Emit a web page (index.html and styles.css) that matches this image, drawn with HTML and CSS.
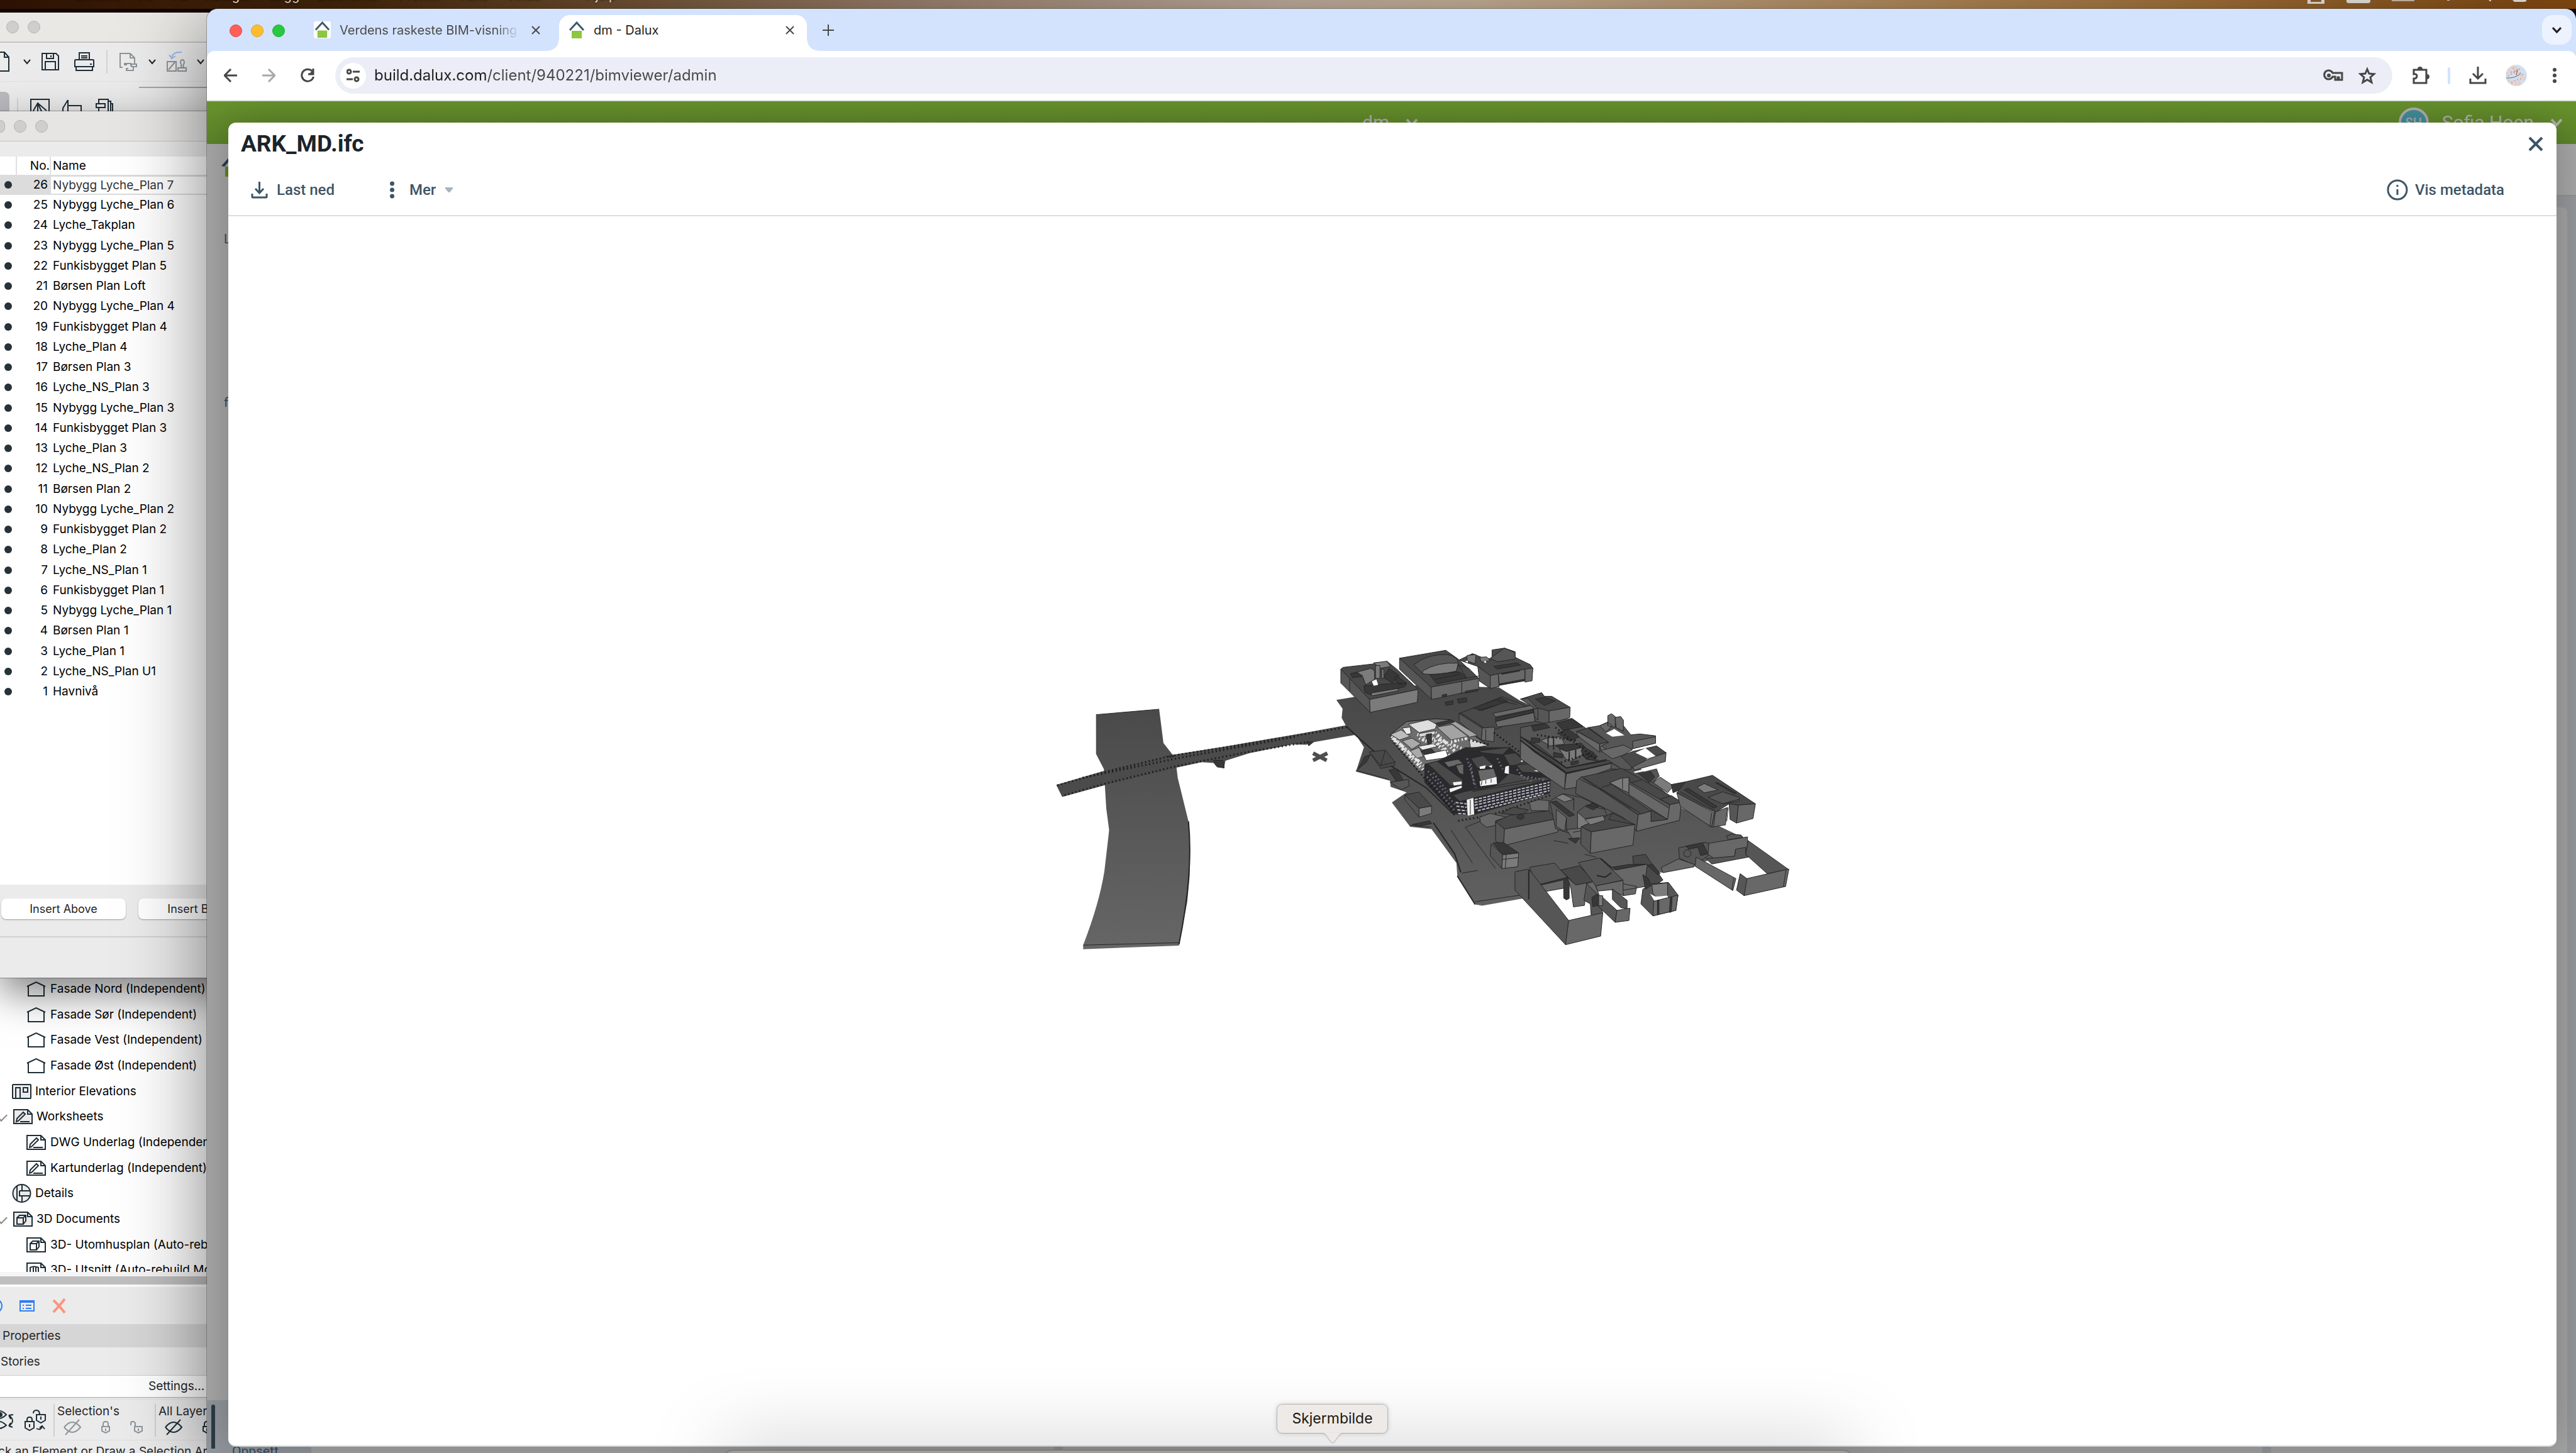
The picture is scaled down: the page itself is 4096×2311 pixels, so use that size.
FILE: index.html
```html
<!DOCTYPE html>
<html lang="no">
<head>
<meta charset="utf-8">
<title>dm - Dalux</title>
<link rel="stylesheet" href="styles.css">
</head>
<body>
<svg class="defs" width="0" height="0" aria-hidden="true">
  <defs>
    <symbol id="i-house" viewBox="0 0 31 26"><path d="M1 9 15.500 2 30 9M3 9v15h25V9"/></symbol>
    <symbol id="i-interior" viewBox="0 0 31 26"><rect x="1" y="2" width="29" height="22" rx="1" class="tint"/><path d="M6 24V7h7v17M18 7h7v7h-7z"/></symbol>
    <symbol id="i-sheet" viewBox="0 0 31 26"><path class="tint" d="M1 2h22l7 7v15H1zM23 2v7h7"/><path d="M5 21l1-5L16 6l3 3L8 20zM11 21h15"/></symbol>
    <symbol id="i-detail" viewBox="0 0 31 30"><circle cx="15.500" cy="15" r="14" class="tint"/><path d="M8 3v24M16 1v10h13M16 29V19h13M12 11v8h4M12 11h4"/></symbol>
    <symbol id="i-3d" viewBox="0 0 31 26"><path class="tint" d="M1 2h22l7 7v15H1zM23 2v7h7"/><path d="M6 11h10v10H6zM6 11l4-4h10v9l-4 5M16 11l4-4"/></symbol>
    <symbol id="i-cut" viewBox="0 0 31 26"><path d="M1 2h22l7 7v15H1zM23 2v7h7M6 22V9q6-3 13 0v13M11 8v14M15 8v14"/></symbol>
    <symbol id="i-chev" viewBox="0 0 12 12"><path d="M1 3l5 6 5-6"/></symbol>
    <symbol id="i-x" viewBox="0 0 14 14"><path d="M1 1l12 12M13 1 1 13"/></symbol>
    <symbol id="i-eyeoff" viewBox="0 0 28 26"><path d="M1 13q13-16 26 0-13 16-26 0M3 25 25 1"/></symbol>
    <symbol id="i-lock" viewBox="0 0 14 20"><path d="M1 9h12v7l-6 3-6-3zM3 9V5q0-4 4-4t4 4v4M7 12v4"/></symbol>
    <symbol id="i-unlock" viewBox="0 0 20 20"><path d="M7 9h12v7l-6 3-6-3zM1 7V4q0-3 3-3t4 3v5M13 12v4"/></symbol>
    <symbol id="i-dalux" viewBox="0 0 26 28"><path d="M2 14 13 2l11 12" fill="none" stroke="#3d5a6c" stroke-width="3"/><path d="M5 15h16v12H5z" fill="#8dc63f" stroke="none"/></symbol>
  </defs>
</svg>

<div class="desktop">
  <div class="menubar">
    <nav class="menus"><span>Chrome</span><span>Fil</span><span>Vis</span><span>Rediger</span><span>Logg</span><span>Bokmerker</span><span>Profiler</span><span>Fane</span><span>Vindu</span><span>Hjelp</span></nav>
    <svg class="status-icons" width="370" height="8" viewBox="0 0 370 8"><path d="M0 0h27v6H0z" fill="#f4efe9"/><path d="M5 0h17v3H5z" fill="#9a6228"/><path d="M62 0h38v2q0 3-4 3H66q-4 0-4-3z" fill="#f4efe9"/><path d="M134 0h36v2h-36z" fill="#d8c5b0"/><path d="M222 0h4v1h-4zM288 0h4v2h-2zM326 0h22v2l-3 1h-16z" fill="#f4efe9"/></svg>
  </div>

  <section class="archicad">
    <div class="titlebar first"><i></i><i></i></div>
    <div class="tools">
      <svg width="15" height="34" viewBox="0 0 15 34"><path d="M-8 2H7l7 8v22H-8M7 2v8h7"/></svg>
      <svg class="chev c1" width="12" height="12"><use href="#i-chev"/></svg>
      <svg class="c2" width="28" height="30" viewBox="0 0 28 30"><path d="M1 2h22l4 4v22H1zM8 2v8h11V2M15 5v3M6 28V15h16v13"/></svg>
      <svg class="c3" width="32" height="30" viewBox="0 0 32 30"><path d="M8 12V1h16v11M11 6h10M11 9h10M1 13q0-1 2-1h26q2 0 2 1v10H1zM3 23v6h26v-6M25 19h3"/></svg>
      <b class="rule"></b>
      <svg class="c4 dim" width="28" height="30" viewBox="0 0 28 30"><path d="M5 24H1V2h16l7 7v9M17 2v7h7M12 20h-4v-2h10v4M14 26h-3v3h11v-6h5v-4h-8v4h3"/></svg>
      <svg class="chev c5" width="12" height="12"><use href="#i-chev"/></svg>
      <svg class="c6 dim" width="32" height="34" viewBox="0 0 32 34"><path d="M1 17h14v15H1zM3 30 13 18M18 32v-5h13v5zM22 27q3-3 0-8 0-5 3-5t3 5q-3 5 0 8"/><path d="M8 10q2-9 16-8M4 6l4 6 6-4" stroke="#2f7cf6"/></svg>
      <svg class="chev c7" width="12" height="12"><use href="#i-chev"/></svg>
    </div>
    <div class="tools second">
      <span class="pressed"></span><b class="rule"></b>
      <svg class="s1" width="31" height="30" viewBox="0 0 31 30"><path d="M1 2h29v28H1zM5 20 12 8l14 12M12 8v22M5 20v10M12 8l10 22"/></svg>
      <svg class="s2" width="31" height="34" viewBox="0 0 31 34"><path d="M9 3 1 16v18M9 3v31M9 12h21v22M19 30h9"/></svg>
      <svg class="s3" width="28" height="32" viewBox="0 0 28 32"><path d="M5 8V2h15v30M1 9h14v6H1zM5 15v17M20 5h4v27M24 9h3v23"/></svg>
    </div>
    <ul class="navigator">
      <li class="sub"><svg width="31" height="26"><use href="#i-house"/></svg>Fasade Nord (Independent)</li>
      <li class="sub"><svg width="31" height="26"><use href="#i-house"/></svg>Fasade Sør (Independent)</li>
      <li class="sub"><svg width="31" height="26"><use href="#i-house"/></svg>Fasade Vest (Independent)</li>
      <li class="sub"><svg width="31" height="26"><use href="#i-house"/></svg>Fasade Øst (Independent)</li>
      <li><svg width="31" height="26"><use href="#i-interior"/></svg>Interior Elevations</li>
      <li class="open"><svg width="31" height="26"><use href="#i-sheet"/></svg>Worksheets</li>
      <li class="sub"><svg width="31" height="26"><use href="#i-sheet"/></svg>DWG Underlag (Independent)</li>
      <li class="sub"><svg width="31" height="26"><use href="#i-sheet"/></svg>Kartunderlag (Independent)</li>
      <li><svg width="31" height="30"><use href="#i-detail"/></svg>Details</li>
      <li class="open"><svg width="31" height="26"><use href="#i-3d"/></svg>3D Documents</li>
      <li class="sub"><svg width="31" height="26"><use href="#i-3d"/></svg>3D- Utomhusplan (Auto-rebuild Model)</li>
      <li class="sub"><svg width="31" height="26"><use href="#i-cut"/></svg>3D- Utsnitt (Auto-rebuild Model)</li>
    </ul>
    <div class="splitter"></div>
    <div class="actions">
      <svg width="4" height="24" viewBox="0 0 4 24"><circle cx="-8" cy="12" r="11" stroke="#2f7cf6"/></svg>
      <svg class="a1" width="24" height="20" viewBox="0 0 24 20"><path d="M1 2h22v16H1z" stroke="#2f7cf6"/><path d="M1 1h22v4H1z" fill="#2f7cf6" stroke="none"/><path d="M5 9h2M10 9h9M5 14h2M10 14h9" stroke="#2f7cf6"/></svg>
      <svg class="a2" width="22" height="26" viewBox="0 0 22 26"><path d="M2 4l9 9 9 11M20 2l-9 11-9 10" stroke="#fa9580" stroke-width="4"/></svg>
    </div>
    <div class="prop head">Properties</div>
    <div class="prop">Stories</div>
    <div class="settings"><button type="button">Settings...</button></div>
    <div class="layers">
      <svg width="22" height="32" viewBox="0 0 22 32"><path d="M-12 7q10-12 22 0-12 12-22 0M-12 24q10-12 22 0-12 10-22 0M14 8l7-1M14 8l3 6M14 8q12 9 0 17M14 25l6 2M14 25l3-5"/><circle cx="0" cy="7" r="3" fill="#1f2d36"/></svg>
      <svg class="l1" width="34" height="34" viewBox="0 0 34 34"><path d="M1 19h14v10l-7 4-7-4zM4 19v-3q0-4 4-4t4 4v3M8 23v5M19 8h14v9l-7 4-7-4zM14 6q0-5 5-5t5 7M26 11v5M19 30q7 4 9-4M24 29l4-3 4 5"/></svg>
      <div class="group"><span>Selection's</span><div class="dim"><svg width="28" height="26"><use href="#i-eyeoff"/></svg><svg class="g1" width="14" height="20"><use href="#i-lock"/></svg><svg class="g2" width="20" height="20"><use href="#i-unlock"/></svg></div></div>
      <div class="group"><span>All Layers</span><div><svg width="28" height="26"><use href="#i-eyeoff"/></svg><svg class="g1" width="14" height="20"><use href="#i-lock"/></svg></div></div>
    </div>
    <div class="hint"><span>Click an Element or Draw a Selection Area.</span></div>
  </section>

  <section class="stories">
    <div class="titlebar"><i></i><i></i><i></i></div>
    <div class="band"></div>
    <table>
      <thead><tr><th></th><th>No.</th><th>Name</th></tr></thead>
      <tbody>
        <tr class="sel"><td></td><td>26</td><td><input aria-label="Name" value="Nybygg Lyche_Plan 7"></td></tr>
        <tr><td></td><td>25</td><td>Nybygg Lyche_Plan 6</td></tr>
        <tr><td></td><td>24</td><td>Lyche_Takplan</td></tr>
        <tr><td></td><td>23</td><td>Nybygg Lyche_Plan 5</td></tr>
        <tr><td></td><td>22</td><td>Funkisbygget Plan 5</td></tr>
        <tr><td></td><td>21</td><td>Børsen Plan Loft</td></tr>
        <tr><td></td><td>20</td><td>Nybygg Lyche_Plan 4</td></tr>
        <tr><td></td><td>19</td><td>Funkisbygget Plan 4</td></tr>
        <tr><td></td><td>18</td><td>Lyche_Plan 4</td></tr>
        <tr><td></td><td>17</td><td>Børsen Plan 3</td></tr>
        <tr><td></td><td>16</td><td>Lyche_NS_Plan 3</td></tr>
        <tr><td></td><td>15</td><td>Nybygg Lyche_Plan 3</td></tr>
        <tr><td></td><td>14</td><td>Funkisbygget Plan 3</td></tr>
        <tr><td></td><td>13</td><td>Lyche_Plan 3</td></tr>
        <tr><td></td><td>12</td><td>Lyche_NS_Plan 2</td></tr>
        <tr><td></td><td>11</td><td>Børsen Plan 2</td></tr>
        <tr><td></td><td>10</td><td>Nybygg Lyche_Plan 2</td></tr>
        <tr><td></td><td>9</td><td>Funkisbygget Plan 2</td></tr>
        <tr><td></td><td>8</td><td>Lyche_Plan 2</td></tr>
        <tr><td></td><td>7</td><td>Lyche_NS_Plan 1</td></tr>
        <tr><td></td><td>6</td><td>Funkisbygget Plan 1</td></tr>
        <tr><td></td><td>5</td><td>Nybygg Lyche_Plan 1</td></tr>
        <tr><td></td><td>4</td><td>Børsen Plan 1</td></tr>
        <tr><td></td><td>3</td><td>Lyche_Plan 1</td></tr>
        <tr><td></td><td>2</td><td>Lyche_NS_Plan U1</td></tr>
        <tr><td></td><td>1</td><td>Havnivå</td></tr>
      </tbody>
    </table>
    <div class="buttons"><button type="button">Insert Above</button><button type="button">Insert Below</button></div>
    <div class="foot"></div>
  </section>

  <section class="chrome">
    <div class="tabstrip">
      <div class="lights"><i></i><i></i><i></i></div>
      <div class="tab">
        <svg class="fav boxed" width="27" height="27"><use href="#i-dalux"/></svg><span class="fade">Verdens raskeste BIM-visning</span>
        <button type="button" aria-label="Lukk fane"><svg width="14" height="14"><use href="#i-x"/></svg></button>
      </div>
      <div class="tab active">
        <svg class="fav" width="26" height="28"><use href="#i-dalux"/></svg><span>dm - Dalux</span>
        <button type="button" aria-label="Lukk fane"><svg width="14" height="14"><use href="#i-x"/></svg></button>
      </div>
      <button class="plus" type="button" aria-label="Ny fane"><svg width="18" height="18" viewBox="0 0 18 18"><path d="M9 0v18M0 9h18"/></svg></button>
      <button class="search" type="button" aria-label="Søk i faner"><svg width="15" height="12" viewBox="0 0 15 12"><path d="M1 2l6.500 7L14 2"/></svg></button>
    </div>
    <div class="toolbar">
      <button type="button" aria-label="Tilbake"><svg width="21" height="22" viewBox="0 0 21 22"><path d="M21 11H2M11 1 1 11l10 10"/></svg></button>
      <button class="off" type="button" aria-label="Frem"><svg width="21" height="22" viewBox="0 0 21 22"><path d="M0 11h19M10 1l10 10-10 10"/></svg></button>
      <button type="button" aria-label="Last inn på nytt"><svg width="22" height="24" viewBox="0 0 22 24"><path d="M18 5a9.500 9.500 0 1 0 2.500 9M20 1v9h-8"/><path d="M21 2v8h-8z" fill="#474747" stroke="none"/></svg></button>
      <div class="omnibox">
        <span class="site"><svg width="21" height="22" viewBox="0 0 21 22"><circle cx="4" cy="5" r="3"/><path d="M10 5h11M0 17h10"/><circle cx="16" cy="17" r="3"/></svg></span>
        <input class="url" aria-label="Adresse" value="build.dalux.com/client/940221/bimviewer/admin">
        <svg width="32" height="20" viewBox="0 0 32 20"><path d="M15 6h15v11h-5v-4h-2v4h-4v-5h-4a7 7 0 1 1 0-6z"/><circle cx="9" cy="10" r="3" fill="#474747" stroke="none"/></svg>
        <svg width="28" height="28" viewBox="0 0 28 28"><path d="M14 4l3 7 8 .700-6 5.300 2 8-7-4.300L7 25l2-8-6-5.300 8-.700z"/></svg>
      </div>
      <svg class="t1" width="28" height="30" viewBox="0 0 28 30"><path d="M3 6h20v21H3v-7q5 0 5-4t-5-3z"/><path d="M9 5a4 4 0 0 1 8 0zM24 13a4 4 0 0 1 0 8z" fill="#474747" stroke="none"/></svg>
      <b class="sep"></b>
      <svg class="t2" width="28" height="28" viewBox="0 0 28 28"><path d="M14 0v18M6 11l8 8 8-8M2 19v7h24v-7"/></svg>
      <svg class="t3" width="34" height="34" viewBox="0 0 34 34"><circle cx="17" cy="17" r="17" fill="#cfe0f2" stroke="none"/><g stroke="#e6cdc8" stroke-width="5" stroke-dasharray="4 2"><path d="M3 8q10-7 18 0M1 14q14-6 30 8M3 25q10 7 20 1M11 2l8 12M8 30l16 1M24 16l8 8"/></g><g stroke="#c9a49c" stroke-width="2" stroke-dasharray="2 3"><path d="M8 12q10-5 22 6M9 28q8-5 18-6M4 18l20-12M12 5l4 7"/></g><path d="M1 21q14 1 23-7M17 17l2-10" stroke="#7c5f5a" stroke-width="1"/></svg>
      <svg class="t4" width="6" height="24" viewBox="0 0 6 24"><g fill="#474747" stroke="none"><circle cx="3" cy="3" r="3"/><circle cx="3" cy="12" r="3"/><circle cx="3" cy="21" r="3"/></g></svg>
    </div>
    <div class="page">
      <header class="green">
        <span class="project">dm</span><svg class="gchev" width="20" height="14" viewBox="0 0 20 14"><path d="M2 2l8 9 8-9"/></svg>
        <span class="who">SH</span><span class="name">Sofia Hoen</span><svg class="gchev" width="20" height="14" viewBox="0 0 20 14"><path d="M2 2l8 9 8-9"/></svg>
      </header>
      <div class="crumbs"><svg width="44" height="50" viewBox="0 0 44 50"><path d="M0 29 22 4l22 25-5 1L22 10 5 30z" fill="#2c3f4c"/><path d="M6 30h32v16H6z" fill="#5f8829"/></svg></div>
      <div class="workspace">
        <aside><div class="list"><span>L</span><span>f</span></div><div class="setup"><b></b><span>Oppsett</span></div></aside>
        <main><div></div><div></div><div></div></main>
      </div>
      <div class="modal" role="dialog" aria-label="ARK_MD.ifc">
        <div class="modal-head"><h1>ARK_MD.ifc</h1><button type="button" aria-label="Lukk"><svg width="24" height="24" viewBox="0 0 24 24"><path d="M2 2l20 20M22 2 2 22"/></svg></button></div>
        <div class="modal-tools">
          <button type="button"><svg width="27" height="28" viewBox="0 0 27 28"><path d="M13.500 1v17M7 12l6.500 7 6.500-7M2 20v5q0 1 1 1h21q1 0 1-1v-5"/></svg>Last ned</button>
          <button class="more" type="button"><svg width="7" height="28" viewBox="0 0 7 28"><g fill="#3d5566" stroke="none"><circle cx="3.500" cy="4" r="3.500"/><circle cx="3.500" cy="14" r="3.500"/><circle cx="3.500" cy="24" r="3.500"/></g></svg>Mer<svg class="caret" width="12" height="8" viewBox="0 0 12 8"><path d="M0 0h12v2L7 8H5L0 2z" fill="#aab5bd" stroke="none"/></svg></button>
          <button class="meta" type="button"><svg width="34" height="34" viewBox="0 0 34 34"><circle cx="17" cy="17" r="15" stroke-width="3"/><path d="M17 16v9M17 9v3"/></svg>Vis metadata</button>
        </div>
        <div class="viewer">
          <svg class="model" viewBox="1830 1177 1560 760" role="img" aria-label="3D-modell">
            <defs>
              <linearGradient id="riv" x1="0" y1="0" x2="0" y2="1"><stop offset="0" stop-color="#4a4a4a"/><stop offset="1" stop-color="#666"/></linearGradient>
              <linearGradient id="gnd" x1="0" y1="0" x2="0" y2="1"><stop offset="0" stop-color="#474747"/><stop offset="1" stop-color="#606060"/></linearGradient>
            </defs>
            <g transform="translate(1940 1180) scale(.4464 .4082)">
              <path fill="url(#riv)" d="M257 390 522 365 540 520 590 590 600 680 645 880 652 1020 650 1130 640 1250 605 1440V1450L203 1467V1448Q270 1260 292 1110 306 980 312 920L300 820 290 640 257 570z"/>
              <path class="ln" d="M203 1448 605 1437M257 390 522 365"/>
              <path class="ln thick" d="M645 880Q666 1120 605 1445"/>
              <path fill="#4b4b4b" d="M90 712 285 650 570 576 800 536 1130 474 1350 430 1460 418 1490 450 1350 482 1150 520 1140 528 1080 527 900 567 800 602 795 632 760 625 750 612 700 608 600 632 300 712 115 768z"/>
              <g class="dots"><path d="M95 715 285 655 570 580 800 540 1130 480 1350 440M125 760 300 705 600 625 900 560 1150 515M200 680 600 590 1100 490"/></g>
              <path class="dk" d="M750 600 790 600 795 635 765 630zM550 583l40-8-10 10zM1140 515h30l-20 18z"/>
              <path d="M1168 567 1225 600M1168 600 1228 567" stroke="#4d4d4d" stroke-width="6"/>
            </g>
            <g transform="translate(2460 1180) scale(.3333 .3444)">
              <path fill="url(#gnd)" d="M135 382 240 365 600 300 1050 315 1165 385 1700 620 2079 972 2379 1112 2440 1180 2152 1282 1966 1322 1830 1300 1440 1420 1200 1460 955 1502 915 1495 815 1340 810 1270 670 1085 550 1072 447 940 530 885 440 855 437 822 245 772 290 640 250 580 190 525 165 480 170 430z"/>
              <path class="ln thick" d="M190 525 250 580 440 740 640 860 800 1010M680 1050 800 1220 835 1320M815 1340 915 1495"/>
              <path class="ln" d="M245 765 430 815M550 1065 665 1075M860 1075 1030 1300M780 1090 900 1270M915 1480 1200 1440M860 1075 950 1040M840 1325 930 1310"/>
              <path class="r" d="M160 215 172 205 335 187 420 172 475 215 595 325 322 380 210 265z"/>
              <path class="s" d="M160 215 210 265 322 380 325 450 160 290z"/><path class="ln" d="M210 265v70"/>
              <path class="l" d="M322 380 595 325 590 395 325 450zM215 240 330 210 350 225 350 270 300 300 285 260zM345 180 420 172 440 200 380 210z"/>
              <path class="dk" d="M290 305 480 290 530 295 520 310 330 355 295 340zM430 210l60 40-40 40-50-30zM215 238l40-5 30 20-60 8zM470 250l60 40-40 10-30-30z"/>
              <path class="l" d="M355 195h25v70h-25zM390 215h12v50h-12zM330 345l150-25 5 12-150 28z"/>
              <path fill="#fff" d="M335 280 360 270 370 300 345 305z"/>
              <path class="s" d="M490 155 668 312 670 380 490 215z"/>
              <path class="r" d="M490 155 750 112 820 160 935 265 668 312z"/>
              <path class="m" d="M668 312 935 265V325L670 380z"/>
              <path class="s" d="M570 190Q650 130 760 135 820 145 820 185L810 230 620 240z"/>
              <path class="l" d="M620 225Q700 175 820 182L810 225Q700 250 620 240z"/>
              <path class="dk" d="M660 245 830 230 870 262 700 295zM730 355l25-5v12l-25 4zM860 335l70-12v10l-70 12z"/>
              <path class="ln" d="M690 270l140-28M840 285v65M855 265 935 252M860 250l-40-60 60 20 55 55"/>
              <path class="r" d="M825 165 900 130 950 150 1010 160V110L1080 100 1140 120V150L1225 190 1240 210 1050 240 1000 250 930 200z"/>
              <path class="s" d="M930 200 1000 250V320L940 280zM1000 155 1080 100 1140 125V160L1040 175z"/>
              <path class="m" d="M1000 250 1045 240 1050 310 1000 320zM1045 240 1195 215V278L1050 302zM1195 215 1240 208 1235 278 1195 285z"/>
              <path class="l" d="M870 140 920 135 915 185 870 170zM940 150l40-2 20 20-50 8z"/>
              <path fill="#fff" d="M858 172l16-4v12zM965 172l12-2v10l-12-2z"/>
              <path class="dk" d="M1020 200l130-20 20 12-130 22zM1065 238l100-18v5l-100 18zM1050 295l140-25v8l-140 25z"/>
              <path class="dk" d="M745 395 790 386V406L752 412zM815 378 865 370 870 392 822 400z"/>
              <path class="r" d="M825 455 910 425 1065 365 1165 400 1250 440 1040 540 955 535z"/>
              <path class="s" d="M825 455 955 535 950 600 825 500z"/>
              <path class="m" d="M955 535 1025 530 1020 610 950 600zM1030 500 1250 450V500L1040 530zM1015 455 1240 410 1250 430 1030 475z"/>
              <path class="dk" d="M905 425 1060 372 1100 390 950 440zM1030 480 1245 436 1250 448 1030 498z"/>
              <path class="ln" d="M830 450 960 530M930 440l110-30M975 540v60M1040 385l110 22"/>
              <path class="r" d="M320 665 410 655 465 720 460 740 385 755z"/><path class="ln" d="M320 665 385 740 465 720M410 655 385 740"/>
              <path class="dk" d="M430 765l40-10 40 60-30 20zM255 760l40-70 30-10-20 40z"/>
              <path class="s" d="M437 830 540 815 545 850 500 870z"/>
              <path class="r" d="M520 900 600 883 670 960 600 972z"/><path class="s" d="M520 900 600 972V1020L520 925z"/><path class="l" d="M600 972 670 960V1000L600 1020z"/>
              <path class="dk" d="M560 1060l100-20 10 15-60 12z"/>
              <path fill="#6e6e6e" stroke="#1c1c1c" stroke-width="1" d="M440 570 530 500 690 485 780 490 990 630 860 660 640 760 600 772 450 610z"/>
              <g class="speck"><path d="M450 590 630 770M445 580 625 740M480 610 600 720M590 570 690 600M600 590 720 640M650 560 740 660M690 560 800 660M720 600 850 650M780 610 870 590M700 580 780 700"/></g>
              <g stroke="#333" stroke-width="1">
              <path fill="#dedede" d="M540 515 650 490 700 515 690 540 600 560z"/><path fill="#bdbdbd" d="M440 570 500 545 550 580 490 600z"/><path fill="#ececec" d="M505 535 550 530 555 565 530 570zM595 635 680 620 705 635 620 655z"/><path fill="#aaa" d="M505 605 560 590 610 620 560 650zM550 660 600 640 625 690 590 700z"/>
              <path fill="#a3a3a3" d="M700 530 790 515 880 580 780 600zM765 500 800 497 930 575 880 585z"/><path fill="#d8d8d8" d="M880 590 990 630 890 645zM600 565l90-15v20l-90 15z"/><path fill="#fff" d="M625 680 750 655 765 695 640 712z"/></g>
              <path class="dk" d="M690 510l90-20 20 12-90 22zM640 570l30-5v50l-20 10zM610 660l60-12 20 20-60 12z"/>
              <path fill="#2b2b2e" d="M630 730 700 715 860 640 1110 640 1340 810 1335 890 900 1010 800 1005 630 830z"/>
              <g class="r"><path d="M650 730 700 715 850 820 780 850zM890 700 960 685 1020 740 930 755zM1075 680 1140 670 1210 730 1110 740zM1145 735 1200 720 1290 780 1180 775zM1030 850 1110 780 1290 820 900 880zM790 900 860 880 1300 800 1340 815 910 915 830 935zM930 660 1110 640 1070 680 960 670z"/></g>
              <path class="m" d="M740 720 820 705 850 730 765 748zM805 735 850 728V790L825 780zM930 765 1020 755 1035 800 945 825z"/>
              <g fill="#f2f2f2"><path d="M940 825 1035 800 1038 840 945 852zM770 865 840 848V860L775 885zM790 830 840 825V842L795 848zM940 745 975 738 970 756 942 758zM990 742 1012 738 1008 752zM1085 745 1105 740V785L1080 780zM868 925 905 915 910 1005 873 1012zM1245 768l25-8v12zM1170 715l12-6v12z"/></g>
              <g class="win"><path d="M805 940 868 948M810 960 868 966M815 980 868 985M820 1000 868 1003M912 925 1335 830M912 940 1335 845M912 955 1335 860M915 972 1335 875M930 985 1300 895"/></g>
              <g class="win faint"><path d="M650 770 800 950M645 800 800 985M680 780 760 880M870 700 920 860M890 730 910 850M1150 760 1190 810M1210 800 1310 820M1040 700 1070 760M1170 790 1240 830"/></g>
              <path class="ln" d="M950 845l3-20M975 838v-20M1005 832v-20M888 925v80M1335 830v55"/>
              <g class="dots"><path d="M460 615 800 1000M820 1040 1000 1010 1340 900M880 600 1000 625M1020 560 1200 690"/></g>
              <path class="m" d="M940 1020 1000 1000 1090 1020 1030 1040 1030 1065 980 1075 945 1050zM1220 940 1270 925 1330 930V985L1230 985z"/>
              <path class="r" d="M1060 1000 1130 965 1215 980 1180 1010z"/>
              <path class="r" d="M1030 1045 1110 1010 1330 985 1370 1030 1080 1085z"/>
              <path class="s" d="M1030 1045 1080 1085 1075 1175 1030 1150z"/>
              <path class="m" d="M1080 1085 1370 1030 1382 1100 1075 1175z"/><ellipse class="dk" cx="1170" cy="1018" rx="20" ry="14"/>
              <path class="s" d="M1005 1165 1070 1225 1065 1300 1000 1230z"/><path class="dk" d="M1015 1160 1075 1158 1160 1215 1070 1225z"/><path class="l" d="M1070 1225 1160 1215 1155 1290 1065 1300z"/><path class="ln" d="M1070 1250l90-10M1090 1222l-5 75"/>
            </g>
            <g transform="translate(2850 1260) scale(.3444)">
              <path class="r" d="M0 145 115 110 130 130 170 130 270 190 155 210 95 200z"/><path class="m" d="M155 210 270 190 268 245 155 285z"/><path class="s" d="M100 195 155 210V285L80 265 70 200zM0 145 40 140 95 200V260L75 240 70 190z"/>
              <path class="dk" d="M80 145l50-10 60 20-60 25z"/>
              <path class="s" d="M0 300 190 265 280 250 350 300 480 400 610 490 600 530 490 525 250 545 0 370z"/>
              <path class="m" d="M305 320 430 390V435L310 345z"/><path class="r" d="M310 320 370 300 480 370 475 385 430 390z"/><path class="m" d="M430 390 480 378V410L440 435z"/>
              <path class="dk" d="M370 305l40-3 70 50-30 10zM195 275l85-20 60 40-110 20zM200 330l60-20 60 40-50 25zM60 290l80-10 20 20-90 20zM330 440l60-10 30 30-60 15z"/>
              <path class="s" d="M370 300 430 290 475 270 560 290 600 340 650 335 735 345V385L610 415 500 440 440 400 480 380z"/>
              <path class="m" d="M475 235 495 225 515 240V300L475 290zM515 245 545 240 560 260V320L520 300zM430 290 475 272 500 290 465 325z"/>
              <path class="m" d="M610 375 735 350V385L612 415zM435 425 560 395 610 420 560 450 500 470z"/>
              <path fill="#fff" d="M465 330 510 308 565 342 500 350z"/>
              <path class="r" d="M545 455 610 430 740 400 792 437 690 468 620 530z"/><path class="m" d="M610 515 700 470 792 437 788 485 620 532z"/>
              <path fill="#fff" d="M625 437 680 412 735 455 690 468zM618 540 735 510 740 525 620 548z"/>
              <path class="r" d="M0 350 100 400 250 520 480 480 540 520 500 495 250 545z"/>
              <path class="m" d="M0 365 70 430 245 548 240 635 0 470z"/><path class="m" d="M250 548 495 492 490 525 310 590 305 625 240 635z"/>
              <path class="l" d="M110 370 150 355 220 350 240 390 160 400zM210 415 250 430 340 405 335 450 270 485 245 470z"/>
              <path class="dk" d="M190 400 330 385 350 405 250 430zM180 435l50 10v20l-50-5zM370 455l40 5v20l-40-5zM275 488l40-8v15l-40 10zM60 355l45 5v20l-50 5zM340 400l60 40-40 30-30-40z"/>
              <path class="ln thick" d="M0 370 80 430 250 550 490 495M0 350 80 405 250 520 470 475M150 350v65M180 350v70M265 430v50M300 420v50"/>
              <g class="dots"><path d="M190 300 420 480M90 340 300 370M220 490 380 440"/></g>
              <path class="s" d="M305 590 330 568 640 775 630 862 560 790 300 660z"/>
              <path class="r" d="M330 570 550 522 600 548 875 705 810 720 600 600 590 570 485 600 710 755 640 775z"/>
              <path class="l" d="M485 600 550 575 590 572V655L555 640z"/>
              <path class="m" d="M590 605 810 740 800 800 590 665z"/><path class="r" d="M710 750 800 800 710 812z"/>
              <path class="m" d="M640 775 710 755V812L800 800 812 720 875 705 865 805 630 865z"/><path class="r" d="M760 690 820 670 875 705 812 720z"/>
              <path class="ln" d="M345 575 650 765M430 630 600 740M600 600l60-15M555 575v60M320 580 440 640M440 625l55-15"/>
              <path class="s" d="M640 550 740 525 755 565 720 600z"/><path class="l" d="M722 600 760 570 832 618 800 655z"/><path class="dk" d="M650 555l60-15 20 30-30 30zM820 610l80-15 20 20-90 40z"/>
              <path class="r" d="M850 655 900 595 1045 560 1278 715 1185 722 1135 715 1060 762z"/>
              <path class="m" d="M850 655 1055 765 1040 842 870 730zM1055 762 1125 735 1115 830 1040 842zM1185 722 1278 715 1265 795 1175 820z"/><path class="s" d="M1135 715 1185 722 1175 820 1140 800zM1020 680 1100 650 1190 680V700L1100 715z"/>
              <path class="l" d="M960 625 1000 605 1075 640 1000 655z"/><path class="dk" d="M1060 600l15 2 100 55-15 2zM890 640l20-10 160 100-20 10z"/>
              <path class="ln" d="M1040 765l-10 75M1060 762l-10 78M1130 735l-8 75M870 650 1060 755M1100 715l90-25"/>
              <path class="s" d="M160 700 230 660 330 680 455 740 480 800 340 830 330 900 250 870 190 850z"/>
              <path class="l" d="M190 680 230 662 290 690 240 705zM310 760 350 795 460 780 440 820 350 830 310 870z"/><path class="m" d="M195 745 250 790 240 865 195 838zM250 855 330 848V905L285 908z"/>
              <path class="dk" d="M165 705l30-5 100 75-30 10zM355 730l35-20 35 20-30 18zM450 790l30-10 30 25-40 20z"/><path class="ln" d="M250 790v75M290 680v70M310 760l50-40 95 25M285 870l45-8"/>
              <path class="r" d="M330 840 500 765 622 828 385 868z"/><path class="s" d="M330 840 385 868 380 985 328 935z"/><path class="m" d="M385 868 622 828 612 940 380 985z"/>
              <path class="l" d="M350 800 450 780 460 805 380 830z"/><path class="ln" d="M500 765 480 800 620 828M180 915l80 15M350 990l60 15"/><path class="dk" d="M260 905l60-5-20 30z"/>
              <path fill="#fff" d="M770 1092 945 1056 960 1060 1160 1190 1150 1300 870 1300 860 1210 780 1130z"/>
              <path class="s" d="M860 955 1000 925 1025 930 1030 990 950 1050 865 1012z"/><path class="dk" d="M900 945l90-18 30 60-40 10-15-45-50 10z"/><circle class="s" cx="908" cy="985" r="20"/>
              <path class="m" d="M765 1062 860 1015 945 1045V1058L775 1090z"/>
              <path fill="#fff" d="M1040 1045 1240 1005 1342 1092 1230 1130 1165 1120z"/>
              <path class="m" d="M1025 930 1235 895V940L1225 975 1170 965 1165 1000 1060 1018 1020 990z"/><path class="s" d="M1120 890l30-10 50 5 10 12-80 14zM1165 1000l5-38 55-10v40l15 13-200 38-30-30z"/>
              <path class="s" d="M1238 915 1458 1072 1342 1095 1225 990z"/><path class="m" d="M1230 1122 1460 1070 1442 1165 1215 1215z"/><path class="s" d="M1195 1095 1232 1122 1217 1215 1175 1185z"/><path class="m" d="M955 1005 1172 1122 1155 1187 950 1055z"/><path class="ln" d="M1445 1075l-15 92M1160 1120l-10 65"/>
              <path class="m" d="M500 1075 690 1042 705 1080 680 1165 560 1185 510 1100zM555 1150 632 1165 625 1205 560 1215z"/><path class="r" d="M610 1000 680 990 775 1130 700 1180 680 1120 690 1045 615 1045z"/><path class="dk" d="M500 1060l90-15 90 0-160 30zM690 1050l30-5 40 50-15 5z"/>
              <path class="s" d="M665 1180 715 1150 805 1143 857 1212 845 1295 720 1325 655 1260z"/><path class="l" d="M715 1155 800 1145V1218L735 1222 720 1200z"/><path fill="#fff" d="M705 1205 735 1220 800 1215 805 1235 730 1245z"/><path class="m" d="M725 1245 857 1212 845 1295 720 1325z"/><path class="dk" d="M815 1225l10-3-5 82-10 2zM745 1240h8v78h-8zM665 1100l30 20 15 40-30 20z"/>
              <path fill="#fff" d="M110 1195 300 1150 560 1190 545 1290 515 1365 440 1330 240 1360z"/>
              <path class="m" d="M60 1155 260 1110V1170L120 1195z"/><path class="dk" d="M80 1150l150-30v10l-130 30zM235 1120h30v110l-15 8-15-10z"/>
              <path class="r" d="M220 1075 320 1052 400 1138 300 1157z"/><path class="s" d="M50 1060 185 1038 255 1115 80 1160z"/>
              <path class="m" d="M255 1115 300 1157 362 1145 348 1268 288 1276 275 1180zM360 1148 400 1138 435 1230 380 1240z"/>
              <path class="s" d="M360 1148 430 1220 447 1310 385 1335 380 1260 345 1240z"/>
              <path class="s" d="M315 1035 430 1010 558 1130 410 1162z"/><path class="m" d="M410 1162 558 1132V1215L495 1183 420 1190z"/><path class="ln thick" d="M415 1105l45 10 35-25M435 1012l65 55"/>
              <path class="s" d="M500 1178 580 1240V1288L545 1280 500 1235zM440 1218 525 1295 515 1360 425 1275z"/><path class="m" d="M525 1295 596 1283 590 1350 515 1360z"/><path class="dk" d="M388 1225l30-20 15 60-40 10z"/><path class="l" d="M425 1215h22v55h-22z"/>
              <path class="s" d="M-30 1085 45 1070 262 1350 245 1482 -30 1185z"/><path class="m" d="M262 1350 448 1308 436 1435 245 1482z"/><path class="ln thick" d="M45 1075v160"/>
            </g>
          </svg>
        </div>
      </div>
    </div>
  </section>

  <div class="dock"></div>
  <div class="tip">Skjermbilde<svg width="32" height="16" viewBox="0 0 32 16"><path d="M0 0q4 0 7 5l7 9q2 2 4 0l7-9q3-5 7-5z"/></svg></div>
</div>
</body>
</html>
```
FILE: styles.css
```css
* { box-sizing: border-box; }
body { margin: 0; font-family: Inter, "Liberation Sans", sans-serif; font-size: 19px; line-height: 24px; color: #000; }
button, input { font: inherit; color: inherit; border: 0; padding: 0; margin: 0; background: none; }
button { display: flex; align-items: center; }
svg { display: block; flex: none; fill: none; stroke: #1f2d36; stroke-width: 2; }
.defs { position: absolute; }
.desktop { position: relative; height: 100vh; overflow: hidden; background: #120502; }

.menubar { display: flex; justify-content: space-between; height: 14px; overflow: hidden; background: linear-gradient(90deg, #2c1103 0, #4a2a0c 14%, #6b4a28 22%, #a08570 35%, #c8b5a3 50%, #ceb89e 57%, #b98e5c 75%, #a9763c 85%, #84490f 100%); }
.menus { display: flex; gap: 28px; margin-top: -19px; padding-left: 118px; font-size: 20px; color: #fff; text-shadow: 0 1px 3px rgba(0,0,0,.5); }
.menus span:last-child { margin-left: 44px; }
.status-icons { margin-right: 57px; stroke: none; }

/* Archicad main window */
.archicad { position: absolute; inset: 20px auto 0 0; width: 420px; display: flex; flex-direction: column; background: #ebebeb; }
.titlebar { display: flex; flex: none; align-items: center; gap: 14px; height: 48px; background: #e6e5e4; border-bottom: 1px solid #c4c4c4; }
.titlebar.first { padding-left: 10px; background: #e9e8e4; border-bottom-width: 2px; }
.titlebar i { width: 20px; height: 20px; border-radius: 50%; background: #cfcecc; border: 1px solid #b5b4b2; }
.tools { display: flex; align-items: center; height: 62px; padding-bottom: 2px; border-bottom: 1px solid #e0e0e0; }
.tools .chev { stroke: #222; }
.tools .rule { width: 2px; height: 38px; background: #d2d2d2; margin-left: 19px; }
.dim { opacity: .45; }
.c1 { margin-left: 22px; } .c2 { margin-left: 17px; } .c3 { margin-left: 24px; } .c4 { margin-left: 19px; } .c5 { margin-left: 18px; } .c6 { margin-left: 17px; } .c7 { margin-left: 16px; }
.tools.second { flex: 1; align-items: flex-start; padding-top: 26px; border: 0; background: linear-gradient(#a6a6a6, #a6a6a6) 221px 8px / 200px 2px no-repeat; }
.second .pressed { width: 15px; height: 50px; margin-top: -10px; background: #b9b8bd; border-radius: 0 8px 0 0; }
.second .rule { margin-left: 12px; }
.s1 { margin-left: 19px; } .s2 { margin-left: 20px; } .s3 { margin-left: 22px; }
.navigator { display: grid; grid-template-rows: repeat(4, 41px 41px 40px); flex: none; height: 471px; margin: 0; padding: 0; overflow: hidden; list-style: none; background: #fff; white-space: nowrap; }
.navigator li { display: flex; align-items: center; gap: 6px; padding-left: 19px; --tint: #ebebeb; }
.navigator .sub { gap: 7px; padding-left: 42px; --tint: none; }
.navigator .open { padding-left: 0; }
.navigator .open::before { content: ""; width: 12px; height: 12px; margin: -4px 6px 0 -5px; border: solid #888; border-width: 0 2px 2px 0; transform: rotate(45deg); }
.tint { fill: var(--tint, none); }
.splitter { flex: none; height: 24px; background: #bfbfbf; border-top: 7px solid #f5f5f5; border-bottom: 4px solid #fafafa; }
.actions { display: flex; flex: none; align-items: center; height: 59px; }
.a1 { margin-left: 27px; } .a2 { margin-left: 28px; }
.prop { flex: none; height: 44px; padding: 0 1px; line-height: 46px; color: #262626; }
.prop.head { height: 37px; padding: 0 4px; line-height: 38px; background: #d6d6d6; }
.settings { display: flex; flex: none; height: 36px; padding-left: 236px; background: #fff; border: solid #aaa; border-width: 1px 0; border-top-color: #ccc; color: #262626; }
.layers { display: flex; flex: none; align-items: center; height: 67px; margin-top: 1px; border: solid #dedede; border-width: 3px 0 1px; border-top-color: #e4e4e4; color: #262626; }
.l1 { margin-left: 17px; margin-right: 12px; }
.group { width: 161px; height: 52px; padding-left: 4px; border-left: 2px solid #d0d0d0; white-space: nowrap; }
.group div { display: flex; align-items: center; padding-left: 10px; }
.g1 { margin-left: 32px; } .g2 { margin-left: 32px; }
.hint { flex: none; height: 20px; padding-top: 6px; overflow: hidden; white-space: nowrap; color: #262626; }
.hint span { margin-left: -26px; }

/* Story settings dialog */
.stories { position: absolute; left: 0; top: 177px; width: 420px; height: 1378px; display: flex; flex-direction: column; background: #fff; box-shadow: 0 0 1px 1px rgba(0,0,0,.25), 0 24px 60px rgba(0,0,0,.5); }
.stories .titlebar i:first-child { width: 8px; border-radius: 0 10px 10px 0; border-left: 0; }
.band { flex: none; height: 24px; background: #ebebeb; }
.stories table { flex: none; width: 100%; border-collapse: collapse; table-layout: fixed; }
.stories th, .stories td { padding: 0; text-align: left; font-weight: 400; white-space: nowrap; }
.stories thead tr { height: 29px; }
.stories tbody tr { height: 32px; }
.stories tbody tr:nth-child(4n) { height: 33px; }
.stories th:nth-child(1) { width: 26px; border-right: 2px solid #e0e0e0; }
.stories th:nth-child(2) { width: 54px; text-align: right; border-right: 2px solid #e0e0e0; }
.stories th:nth-child(3) { padding-left: 3px; }
.stories td:nth-child(2) { text-align: right; padding-right: 4px; }
.stories td:nth-child(3) { padding-left: 4px; }
.stories td:first-child::before { content: ""; display: block; width: 12px; height: 12px; margin-left: 7px; border-radius: 50%; background: #263238; }
.stories .sel { background: #dcdcdc; }
.stories .sel td:nth-child(3) { padding-left: 1px; }
.stories input { display: block; width: 100%; height: 27px; padding-left: 3px; background: #fff; color: #333; }
.buttons { display: flex; flex: none; gap: 20px; height: 82px; margin-top: auto; padding: 22px 2px 0; background: #ebebeb; }
.buttons button { width: 200px; height: 33px; justify-content: center; background: #fff; border-radius: 8px; box-shadow: 0 1px 2px rgba(0,0,0,.35); font-size: 18px; color: #262626; }
.foot { flex: none; height: 66px; background: #ebebeb; border-top: 2px solid #d2d2d2; }

/* Browser window */
.chrome { position: absolute; inset: 14px 0 0 329px; display: flex; flex-direction: column; border-radius: 17px 17px 0 0; background: #d3e3fd; box-shadow: 0 0 0 1px rgba(0,0,0,.25), 0 24px 130px rgba(0,0,0,.5); }
.tabstrip { display: flex; flex: none; height: 67px; padding: 10px 7px 0 36px; font-size: 20px; color: #474747; }
.tabstrip svg { stroke: #474747; }
.lights { display: flex; gap: 14px; padding-top: 15px; }
.lights i { width: 20px; height: 20px; border-radius: 50%; background: #ff5f57; border: 1px solid #e2463f; }
.lights i:nth-child(2) { background: #febc2e; border-color: #e0a023; }
.lights i:nth-child(3) { background: #28c840; border-color: #1dad2b; }
.tab { display: flex; align-items: center; gap: 14px; width: 402px; margin-left: 34px; padding: 0 30px 10px 12px; white-space: nowrap; }
.tab button { margin-left: auto; }
.boxed { background: #fff; border-radius: 3px; }
.fade { width: 282px; overflow: hidden; color: transparent; background: linear-gradient(90deg, #474747 88%, #c3d2ec) text; }
.tab.active { position: relative; width: 394px; margin-left: 0; padding: 0 20px 10px 15px; background: #fff; border-radius: 17px 17px 0 0; color: #1f1f1f; }
.tab.active::before, .tab.active::after { content: ""; position: absolute; bottom: 0; width: 18px; height: 18px; left: -18px; background: radial-gradient(circle at 0 0, transparent 17px, #fff 18px); }
.tab.active::after { left: auto; right: -18px; background: radial-gradient(circle at 100% 0, transparent 17px, #fff 18px); }
.plus { margin-left: 25px; padding-bottom: 10px; }
.search { width: 47px; height: 47px; margin-left: auto; justify-content: center; background: #ecf3fe; border-radius: 17px; }
.search svg { stroke: #1f1f1f; stroke-width: 3; }
.toolbar { display: flex; flex: none; align-items: center; height: 80px; padding: 0 31px 0 27px; background: #fff; border-bottom: 2px solid #dde2e2; border-radius: 12px 12px 0 0; }
.toolbar svg { stroke: #474747; stroke-width: 3; }
.toolbar button + button { margin-left: 40px; }
.toolbar .off svg { stroke: #a8a8a8; }
.omnibox { display: flex; flex: 1; align-items: center; gap: 24px; height: 58px; margin-left: 33px; padding: 0 26px 0 8px; background: #ebeef7; border-radius: 29px; }
.site { display: grid; place-items: center; width: 41px; height: 41px; border-radius: 50%; background: #fff; }
.url { flex: 1; margin-left: -11px; font-size: 24px; line-height: 30px; color: transparent; background: linear-gradient(90deg, #1f1f1f 178px, #474747 178px) text; }
.t1 { margin-left: 31px; } .t2 { margin-left: 30px; } .t3 { margin-left: 30px; border-radius: 50%; } .t4 { margin-left: 41px; }
.sep { width: 4px; height: 27px; margin-left: 29px; border-radius: 2px; background: #d3e3fd; }

/* Dalux page behind the dialog */
.page { position: relative; display: flex; flex: 1; flex-direction: column; min-height: 0; overflow: hidden; font-family: Roboto, "Liberation Sans", sans-serif; background: #a6a6a6; }
.green { display: flex; flex: none; height: 68px; padding: 16px 21px 0 1837px; background: linear-gradient(#69942d, #5d842a); font-size: 30px; line-height: 36px; color: #b1b1b1; }
.gchev { margin: 11px 0 0 26px; stroke: #b1b1b1; stroke-width: 4; }
.who { width: 48px; height: 48px; margin: -6px 21px 0 auto; border: 4px solid #b1b1b1; border-radius: 50%; background: #458f9c; text-align: center; font-size: 20px; font-weight: 500; line-height: 40px; }
.crumbs { flex: none; height: 83px; padding: 6px 23px; background: #a8a8a8; border-bottom: 2px solid #8f9498; }
.crumbs svg { stroke: none; }
.workspace { display: flex; flex: 1; min-height: 0; background: #97999c; }
aside { display: flex; flex-direction: column; width: 166px; margin-top: -2px; background: #a8a8a8; color: #35495a; }
.list { display: flex; flex: 1; flex-direction: column; gap: 232px; padding: 56px 27px; font-size: 20px; line-height: 28px; }
.setup { display: flex; gap: 27px; height: 84px; padding: 7px; background: #92979d; font-size: 21px; }
.setup b { width: 6px; border-radius: 3px 3px 0 0; background: #2b3b45; }
.setup span { padding-top: 62px; }
main { display: flex; flex: 1; gap: 14px; padding: 18px 14px 0 0; }
main div { background: #a5a5a5; border-radius: 8px 8px 0 0; }
main div:nth-child(1) { flex: 1180; } main div:nth-child(2) { flex: 1905; } main div:nth-child(3) { flex: 471; }

.modal { position: absolute; inset: 34px 31px 10px 34px; display: flex; flex-direction: column; background: #fff; border-radius: 12px; border-bottom: 2px solid #d5dade; box-shadow: 0 0 70px rgba(0,0,0,.26); color: #3d5566; }
.modal-head { display: flex; flex: none; align-items: center; justify-content: space-between; height: 66px; padding: 2px 21px 0 20px; }
h1 { margin: 0; font-size: 37px; font-weight: 700; line-height: 40px; color: #1a242b; }
.modal svg { stroke: #3d5566; stroke-width: 4; }
.modal-tools { display: flex; flex: none; align-items: center; height: 83px; padding: 0 83px 0 36px; border-bottom: 2px solid #d8dee2; font-size: 24px; font-weight: 500; }
.modal-tools button { gap: 14px; }
.modal-tools svg { stroke-width: 3; }
.modal-tools .more { gap: 24px; margin-left: 88px; }
.modal-tools .caret { margin-left: -9px; }
.modal-tools .meta { gap: 11px; margin-left: auto; }
.viewer { display: flex; flex: 1; align-items: center; justify-content: center; min-height: 0; overflow: hidden; border-radius: 0 0 12px 12px; }
.modal .model { width: 1324px; stroke: none; stroke-linejoin: round; }
.model path, .model ellipse, .model circle { vector-effect: non-scaling-stroke; }
.model .ln { stroke: #262626; stroke-width: 1; }
.model .ln.thick { stroke-width: 2; }
.model .r, .model .s, .model .m, .model .l, .model .dk { stroke: #262626; stroke-width: 1; }
.model .r { fill: #494949; }
.model .s { fill: #565656; }
.model .m { fill: #686868; }
.model .l { fill: #7b7b7b; }
.model .dk { fill: #383838; }
.model .dots path { stroke: #1c1c1c; stroke-width: 3; stroke-dasharray: 2 4; }
.model .speck path { stroke: #e4e4e4; stroke-width: 5; stroke-dasharray: 2 3 4 2 2 4; }
.model .win path { stroke: #bcbccc; stroke-width: 2; stroke-dasharray: 5 2; }
.model .win.faint path { stroke: #6e6e80; stroke-width: 3; stroke-dasharray: 2 4; }

.dock { position: absolute; left: 28%; right: 28%; top: 2307px; height: 40px; border-radius: 20px; background: #a09c98; box-shadow: 0 0 0 1px #6e6e6e, 0 0 120px rgba(0,0,0,.34); }
.tip { position: absolute; left: 2031px; top: 2234px; width: 175px; height: 45px; border-radius: 8px; background: #eeeae7; box-shadow: 0 0 1px 1px rgba(0,0,0,.2), 0 0 8px rgba(0,0,0,.2); font-size: 23px; line-height: 45px; text-align: center; color: #1a1816; }
.tip svg { position: absolute; left: 72px; top: 45px; fill: #eeeae7; stroke: none; filter: drop-shadow(0 1px 1px rgba(0,0,0,.3)); }
```
